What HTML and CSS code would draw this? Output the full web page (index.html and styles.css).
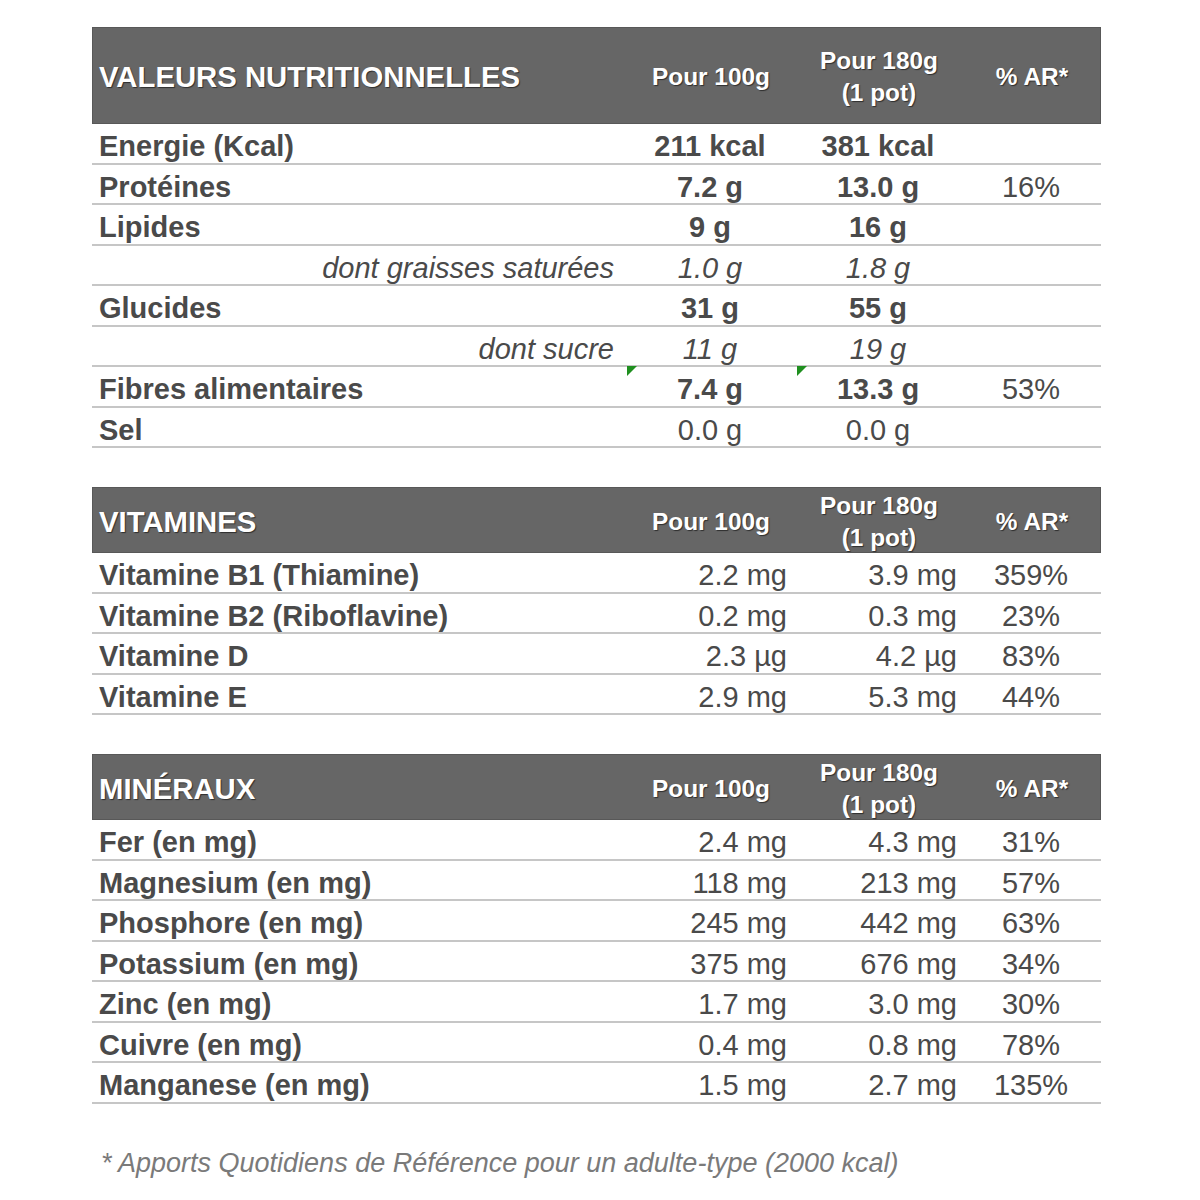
FILE: index.html
```html
<!DOCTYPE html>
<html lang="fr">
<head>
<meta charset="utf-8">
<title>Valeurs nutritionnelles</title>
<link rel="stylesheet" href="styles.css">
</head>
<body>
<main class="sheet">
  <section class="tbl">
    <div class="head head-tall">
      <div class="h-title">VALEURS NUTRITIONNELLES</div>
      <div class="h-col">Pour 100g</div>
      <div class="h-col">Pour 180g<br>(1 pot)</div>
      <div class="h-col">% AR*</div>
    </div>
    <div class="row bold"><div class="lbl">Energie (Kcal)</div><div class="c">211 kcal</div><div class="c">381 kcal</div><div class="c pct"></div></div>
    <div class="row bold"><div class="lbl">Protéines</div><div class="c">7.2 g</div><div class="c">13.0 g</div><div class="c pct">16%</div></div>
    <div class="row bold"><div class="lbl">Lipides</div><div class="c">9 g</div><div class="c">16 g</div><div class="c pct"></div></div>
    <div class="row sub"><div class="lbl">dont graisses saturées</div><div class="c">1.0 g</div><div class="c">1.8 g</div><div class="c pct"></div></div>
    <div class="row bold"><div class="lbl">Glucides</div><div class="c">31 g</div><div class="c">55 g</div><div class="c pct"></div></div>
    <div class="row sub"><div class="lbl">dont sucre</div><div class="c">11 g</div><div class="c">19 g</div><div class="c pct"></div></div>
    <div class="row bold"><div class="lbl">Fibres alimentaires</div><div class="c note">7.4 g</div><div class="c note">13.3 g</div><div class="c pct">53%</div></div>
    <div class="row plain"><div class="lbl">Sel</div><div class="c">0.0 g</div><div class="c">0.0 g</div><div class="c pct"></div></div>
  </section>

  <section class="tbl">
    <div class="head">
      <div class="h-title">VITAMINES</div>
      <div class="h-col">Pour 100g</div>
      <div class="h-col">Pour 180g<br>(1 pot)</div>
      <div class="h-col">% AR*</div>
    </div>
    <div class="row num"><div class="lbl">Vitamine B1 (Thiamine)</div><div class="r">2.2 mg</div><div class="r">3.9 mg</div><div class="c pct">359%</div></div>
    <div class="row num"><div class="lbl">Vitamine B2 (Riboflavine)</div><div class="r">0.2 mg</div><div class="r">0.3 mg</div><div class="c pct">23%</div></div>
    <div class="row num"><div class="lbl">Vitamine D</div><div class="r">2.3 µg</div><div class="r">4.2 µg</div><div class="c pct">83%</div></div>
    <div class="row num"><div class="lbl">Vitamine E</div><div class="r">2.9 mg</div><div class="r">5.3 mg</div><div class="c pct">44%</div></div>
  </section>

  <section class="tbl">
    <div class="head">
      <div class="h-title">MINÉRAUX</div>
      <div class="h-col">Pour 100g</div>
      <div class="h-col">Pour 180g<br>(1 pot)</div>
      <div class="h-col">% AR*</div>
    </div>
    <div class="row num"><div class="lbl">Fer (en mg)</div><div class="r">2.4 mg</div><div class="r">4.3 mg</div><div class="c pct">31%</div></div>
    <div class="row num"><div class="lbl">Magnesium (en mg)</div><div class="r">118 mg</div><div class="r">213 mg</div><div class="c pct">57%</div></div>
    <div class="row num"><div class="lbl">Phosphore (en mg)</div><div class="r">245 mg</div><div class="r">442 mg</div><div class="c pct">63%</div></div>
    <div class="row num"><div class="lbl">Potassium (en mg)</div><div class="r">375 mg</div><div class="r">676 mg</div><div class="c pct">34%</div></div>
    <div class="row num"><div class="lbl">Zinc (en mg)</div><div class="r">1.7 mg</div><div class="r">3.0 mg</div><div class="c pct">30%</div></div>
    <div class="row num"><div class="lbl">Cuivre (en mg)</div><div class="r">0.4 mg</div><div class="r">0.8 mg</div><div class="c pct">78%</div></div>
    <div class="row num"><div class="lbl">Manganese (en mg)</div><div class="r">1.5 mg</div><div class="r">2.7 mg</div><div class="c pct">135%</div></div>
  </section>

  <p class="foot">* Apports Quotidiens de Référence pour un adulte-type (2000 kcal)</p>
</main>
</body>
</html>
```

FILE: styles.css
```css
html, body {
  margin: 0;
  padding: 0;
  background: #ffffff;
}

.sheet {
  width: 1009px;
  margin-left: 92px;
  padding-top: 27px;
  font-family: "Liberation Sans", Arial, Helvetica, sans-serif;
  color: #4a4a4a;
}

.tbl {
  display: flex;
  flex-direction: column;
  margin-bottom: 39px;
}

.head,
.row {
  display: grid;
  grid-template-columns: 533px 170px 166px 140px;
  align-items: center;
}

.head {
  box-sizing: border-box;
  height: 66px;
  padding-top: 2px;
  background: #666666;
  border: 1px solid #585858;
  color: #ffffff;
  font-weight: bold;
  text-shadow: 1px 1px 1px rgba(0, 0, 0, 0.55);
}

.head-tall {
  height: 97px;
}

.h-title {
  font-size: 29.3px;
  padding-left: 6px;
}

.h-col {
  font-size: 24.4px;
  line-height: 32px;
  text-align: center;
}

.row {
  box-sizing: border-box;
  height: 40.5px;
  padding-top: 5px;
  border-bottom: 2px solid #c6c6c6;
  font-size: 29px;
  line-height: 34px;
}

.lbl {
  font-weight: bold;
  padding-left: 7px;
  white-space: nowrap;
}

.c {
  text-align: center;
}

.note {
  position: relative;
}

.r {
  text-align: right;
  padding-right: 6px;
  white-space: nowrap;
}

.row.num .r:nth-child(2) {
  padding-right: 8px;
}

.row.num .r:nth-child(3) {
  padding-right: 4px;
}

.row.bold .c {
  font-weight: bold;
}

.row .c.pct {
  font-weight: normal;
}

.row.sub .lbl {
  font-weight: normal;
  font-style: italic;
  text-align: right;
  padding-right: 11px;
}

.row.sub .c {
  font-style: italic;
}

.row.plain .c {
  font-weight: normal;
}

.note::before {
  content: "";
  position: absolute;
  left: 2px;
  top: -6px;
  width: 10px;
  height: 10px;
  background: #1f8f1f;
  clip-path: polygon(0 0, 100% 0, 0 100%);
}

.foot {
  margin: 44px 0 0 9px;
  font-size: 27px;
  font-style: italic;
  color: #7a7a7a;
}
```
